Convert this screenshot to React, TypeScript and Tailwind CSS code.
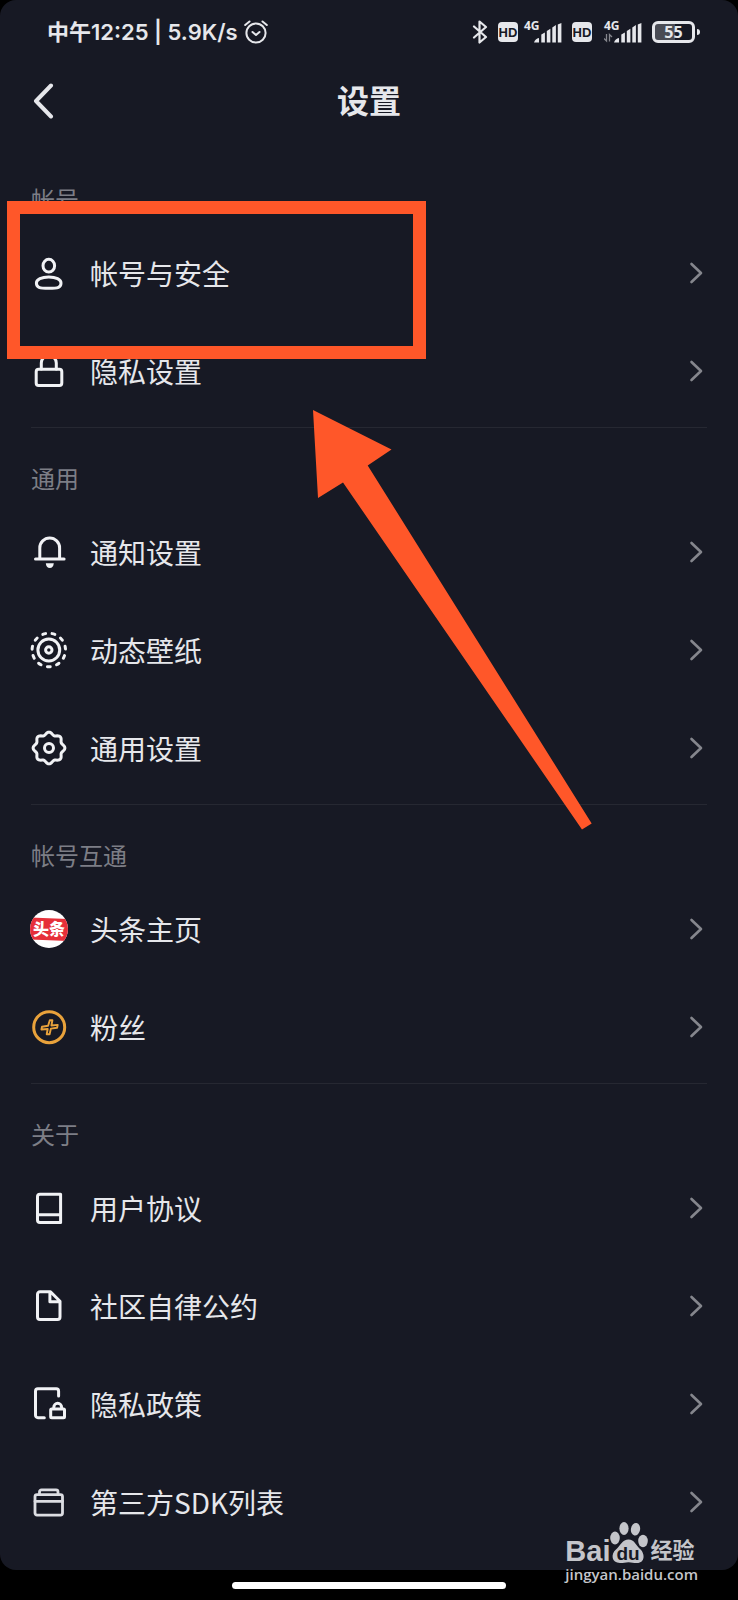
import React from "react";

const LINE = {
  fill: "none",
  stroke: "currentColor",
  strokeWidth: 3,
  strokeLinecap: "round" as const,
  strokeLinejoin: "round" as const,
};

function Glyph({ children }: { children: React.ReactNode }) {
  return (
    <svg viewBox="0 0 36 36" className="size-9 shrink-0 overflow-visible" aria-hidden="true" {...LINE}>
      {children}
    </svg>
  );
}

const gearPath =
  Array.from({ length: 96 }, (_, i) => {
    const t = (i / 96) * Math.PI * 2;
    const r = 14.6 + 1.3 * Math.cos(8 * t);
    return `${i ? "L" : "M"}${(18 + r * Math.sin(t)).toFixed(2)} ${(18 - r * Math.cos(t)).toFixed(2)}`;
  }).join("") + "Z";

const icons = {
  user: (
    <Glyph>
      <ellipse cx="17.8" cy="10.7" rx="5.8" ry="6.4" />
      <path d="M17.8 22c7.200 0 12.200 2.400 12.200 6.100 0 4.200-2.600 5.200-12.200 5.200S5.400 32.300 5.400 28.100C5.400 24.400 10.600 22 17.800 22Z" />
    </Glyph>
  ),
  lock: (
    <Glyph>
      <rect x="5.200" y="16.300" width="25.600" height="16.200" rx="2.400" />
      <path d="M10.300 16V10a7.500 7.500 0 0 1 15 0v6" />
    </Glyph>
  ),
  bell: (
    <Glyph>
      <path d="M4.500 25h28.600M8.800 25V13.900a9.900 9.900 0 0 1 19.800 0V25" />
      <path d="M14.800 29.300h8c-.2 2.900-1.700 4.700-4 4.700s-3.800-1.800-4-4.700Z" fill="currentColor" stroke="none" />
    </Glyph>
  ),
  wallpaper: (
    <Glyph>
      <circle cx="17.800" cy="18" r="16.700" pathLength="110" strokeDasharray="3 7" transform="rotate(85.100 17.800 18)" />
      <circle cx="17.800" cy="18" r="10.900" />
      <circle cx="17.800" cy="18" r="3.200" />
    </Glyph>
  ),
  gear: (
    <Glyph>
      <path d={gearPath} />
      <circle cx="18" cy="18" r="4.500" />
    </Glyph>
  ),
  toutiao: (
    <span className="flex size-9 shrink-0 items-center justify-center">
      <svg viewBox="0 0 38 38" className="size-[38px] shrink-0" aria-hidden="true">
        <clipPath id="disc">
          <circle cx="19" cy="19" r="19" />
        </clipPath>
        <g clipPath="url(#disc)">
          <rect width="38" height="38" fill="#fff" />
          <path d="M0 7.500 38 9v22L0 29.500Z" fill="#e6303a" />
          <text x="19" y="25" textAnchor="middle" fontSize="16" fontWeight="900" fill="#fff" fontFamily="'Noto Sans CJK SC', sans-serif">
            头条
          </text>
        </g>
      </svg>
    </span>
  ),
  fans: (
    <Glyph>
      <g stroke="#e9a23b">
        <circle cx="18.200" cy="18.200" r="15.500" />
        <path
          strokeWidth="1.900"
          d="M18.800 11.200h2.600l-1 5.300 6.300-.6-.6 2.800-6.200.9-1.300 5.600h-2.900l1-5.200-6.300.5.600-2.800 6.100-1Z"
        />
      </g>
    </Glyph>
  ),
  book: (
    <Glyph>
      <path d="M29.600 4.200H9a2.500 2.500 0 0 0-2.500 2.500v23.200A2.500 2.500 0 0 0 9 32.400h20.600ZM6.500 24.700h23" />
    </Glyph>
  ),
  file: (
    <Glyph>
      <path d="M19.500 3.800H9a2.500 2.500 0 0 0-2.500 2.500V29A2.500 2.500 0 0 0 9 31.500h17.500A2.500 2.500 0 0 0 29 29V13.300ZM18.900 4v9.800h10" />
    </Glyph>
  ),
  privacy: (
    <Glyph>
      <path d="M13.300 31.700H6.900a2.400 2.400 0 0 1-2.400-2.400V5.200a2.400 2.400 0 0 1 2.400-2.400h18.300a2.400 2.400 0 0 1 2.400 2.400V10" />
      <rect x="19.700" y="23" width="13.800" height="8.700" rx="1" />
      <path d="M22.800 22.500v-1.300a3.900 3.900 0 0 1 7.800 0v1.300" />
    </Glyph>
  ),
  box: (
    <Glyph>
      <g stroke="#dcdde2" strokeWidth="2.800">
        <rect x="4" y="10.600" width="27.500" height="20.500" rx="2" />
        <path d="M4 17.300h27.500M8.500 10V7.800a2 2 0 0 1 2-2H25a2 2 0 0 1 2 2V10" />
      </g>
    </Glyph>
  ),
};

const sections: { title: string; items: [string, React.ReactNode][] }[] = [
  { title: "帐号", items: [["帐号与安全", icons.user], ["隐私设置", icons.lock]] },
  { title: "通用", items: [["通知设置", icons.bell], ["动态壁纸", icons.wallpaper], ["通用设置", icons.gear]] },
  { title: "帐号互通", items: [["头条主页", icons.toutiao], ["粉丝", icons.fans]] },
  {
    title: "关于",
    items: [
      ["用户协议", icons.book],
      ["社区自律公约", icons.file],
      ["隐私政策", icons.privacy],
      ["第三方SDK列表", icons.box],
    ],
  },
];

function Hd() {
  return (
    <span className="flex h-5 w-5 items-center justify-center rounded-[4px] bg-[#e6e7eb] font-['Liberation_Sans'] text-[13px] leading-none font-bold text-[#171924]">
      HD
    </span>
  );
}

function Signal({ data }: { data?: boolean }) {
  return (
    <span className="relative flex h-6 w-[38px] justify-end">
      <span className="absolute top-0 left-0 font-['Open_Sans'] text-[12px] leading-3 font-bold">4G</span>
      <svg viewBox="0 0 38 24" className="h-6 w-[38px]" fill="currentColor" aria-hidden="true">
        <path d="M10 22.500a7 7 0 0 1 5-4.500v4.500ZM17.300 22.500V14.500l3.600-2v10ZM22.800 22.500V11l3.600-2.300v13.800ZM28.300 22.500V7.500l3.600-2.500v17.500ZM33.800 22.500V4.500L37.400 3v19.500Z" />
        {data && <path d="M2.500 14v7L0 18.500M5.500 21.500v-7L8 17" fill="none" stroke="#85868d" strokeWidth="1.300" />}
      </svg>
    </span>
  );
}

function StatusBar() {
  return (
    <div className="flex h-16 items-center justify-between pr-[38px] pl-[47px] text-[#e6e7eb]">
      <div className="flex items-center gap-1.5">
        <span className="font-[Inter,'Noto_Sans_CJK_SC',sans-serif] text-[22px] leading-8 font-semibold">中午12:25 | 5.9K/s</span>
        <svg viewBox="0 0 24 24" className="size-6" aria-hidden="true" {...LINE} strokeWidth={2}>
          <circle cx="12" cy="13" r="9.600" />
          <path d="m8.500 12 3.500 3 3.500-3M1.200 5 5.500 1.500M22.800 5l-4.300-3.500" />
        </svg>
      </div>
      <div className="flex items-center">
        <svg viewBox="0 0 16 24" className="mr-2.5 h-6 w-4" aria-hidden="true" {...LINE} strokeWidth={2.200}>
          <path d="M2 6.500 14 17l-6.500 5.500v-21L14 7 2 17.500" />
        </svg>
        <Hd />
        <span className="ml-1.5">
          <Signal />
        </span>
        <span className="ml-2.5">
          <Hd />
        </span>
        <span className="ml-3">
          <Signal data />
        </span>
        <span className="ml-2.5 flex items-center gap-0.5">
          <span className="flex h-[22px] w-[43px] items-center justify-center rounded-[6px] border-[3px] border-current bg-[linear-gradient(90deg,#4a4c55_55%,transparent_55%)] font-['Open_Sans'] text-[16px] leading-none font-bold">
            55
          </span>
          <span className="h-1.5 w-[3px] rounded-r bg-current" />
        </span>
      </div>
    </div>
  );
}

function Watermark() {
  return (
    <div className="absolute right-10 bottom-4 flex flex-col text-[#c4c5ca]">
      <div className="flex h-[42px] items-end">
        <span className="font-['Liberation_Sans'] text-[29px] leading-[26px] font-bold">Bai</span>
        <svg viewBox="0 0 38 42" className="mr-0.5 h-[42px] w-[38px]" fill="currentColor" aria-hidden="true">
          <ellipse cx="5" cy="16" rx="4.800" ry="6.500" />
          <ellipse cx="14" cy="6.500" rx="4.600" ry="6.500" />
          <ellipse cx="25.500" cy="7.300" rx="4.600" ry="6.300" transform="rotate(10 25.500 7.300)" />
          <ellipse cx="33" cy="19" rx="4.800" ry="6.200" />
          <path d="M18.500 17.500c6 0 7.500 6 11.500 9.500 5 4 5.500 14-3 14-4 0-5-.8-8.500-.8s-4.500.8-8.500.8c-8.500 0-9.500-9-4-13.500 4.500-4 6.500-10 12.500-10Z" />
          <text x="18" y="37.500" textAnchor="middle" fontSize="19" fontWeight="700" fill="#171924" fontFamily="'Liberation Sans', sans-serif">
            du
          </text>
        </svg>
        <span className="font-['Liberation_Sans','Noto_Sans_CJK_SC',sans-serif] text-[22px] leading-[26px] font-bold">经验</span>
      </div>
      <span className="font-['Open_Sans'] text-[15px] leading-5 font-semibold">jingyan.baidu.com</span>
    </div>
  );
}

export default function App() {
  return (
    <div className="relative bg-black font-['Noto_Sans_CJK_SC',sans-serif]">
      <div className="rounded-[16px] bg-[#171924]">
        <StatusBar />
        <header className="grid h-[74px] grid-cols-[1fr_auto_1fr] items-center px-[31px]">
          <button type="button" aria-label="返回" className="justify-self-start text-[#e6e7eb]">
            <svg viewBox="0 0 24 36" className="h-9 w-6" aria-hidden="true" {...LINE} strokeWidth={4}>
              <path d="M20 2.500 5 18l15 15.500" />
            </svg>
          </button>
          <h1 className="pb-1 text-[32px] leading-10 font-bold text-[#e6e7eb]">设置</h1>
        </header>
        <main className="px-[31px] pt-[11px] pb-[19px]">
          {sections.map((section) => (
            <section key={section.title} className="border-b border-[#262832] pb-[7px] last:border-0 last:pb-0">
              <h2 className="pt-8 pb-[7px] text-[24px] leading-9 text-[#7d7e86]">{section.title}</h2>
              <ul>
                {section.items.map(([label, icon]) => (
                  <li key={label}>
                    <a href="#" className="flex h-[98px] items-center pr-1 text-[#f1f2f5]">
                      {icon}
                      <span className="ml-[23px] flex-1 pb-px text-[28px] leading-10 text-[#e6e7eb]">{label}</span>
                      <svg viewBox="0 0 14 22" className="h-[22px] w-3.5 text-[#85868d]" aria-hidden="true" {...LINE} strokeWidth={2.600}>
                        <path d="m2.500 2 9.500 9-9.500 9" />
                      </svg>
                    </a>
                  </li>
                ))}
              </ul>
            </section>
          ))}
        </main>
      </div>
      <div className="flex h-[30px] items-center justify-center">
        <div className="h-[7px] w-[37%] rounded-full bg-white" />
      </div>

      <div className="absolute top-[201px] left-[7px] h-[158px] w-[419px] border-[13px] border-[#ff5729]" />
      <svg viewBox="0 0 280 421" className="absolute top-[410px] left-[313px] h-[421px] w-[280px]" fill="#ff5729" aria-hidden="true">
        <path d="M0 0 78.500 39.500 54.700 55.500 278.700 413.500 269 419.500 30 72.500 5 88Z" />
      </svg>
      <Watermark />
    </div>
  );
}
